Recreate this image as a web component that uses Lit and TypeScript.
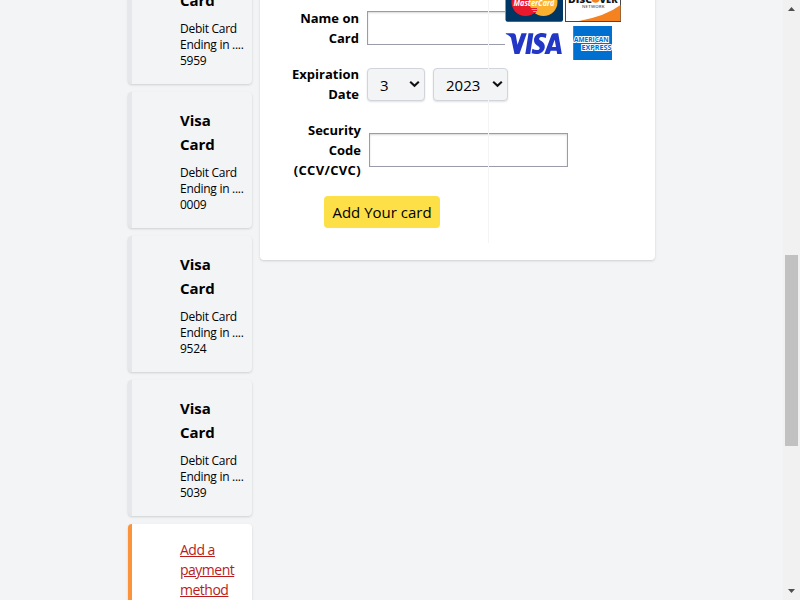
import { LitElement, html, css, svg } from "lit";
import { customElement, property } from "lit/decorators.js";

@customElement("payment-card")
class PaymentCard extends LitElement {
  @property() ending = "";
  @property({ type: Boolean }) add = false;

  static styles = css`
    :host { display: block; flex: none; }
    .card {
      box-sizing: border-box; width: 124px; height: 136px;
      padding: 16px 0 16px 48px; border-left: 4px solid #e5e7eb;
      border-radius: 4px; background: #f3f4f6; white-space: nowrap;
      box-shadow: 0 1px 3px rgba(0,0,0,.1), 0 1px 2px rgba(0,0,0,.06);
    }
    .card.add { background: #fff; border-left-color: #fb923c; }
    .title { font: 700 15px/24px "Open Sans", sans-serif; letter-spacing: -0.05px; }
    .detail { margin-top: 9px; font: 400 12px/16px "Open Sans", sans-serif; letter-spacing: -0.28px; }
    .link { font: 400 14px/20px "Open Sans", sans-serif; letter-spacing: -0.5px; color: #b91c1c; text-decoration: underline; }
  `;

  render() {
    return this.add
      ? html`<div class="card add"><div class="link">Add a<br>payment<br>method</div></div>`
      : html`<div class="card">
          <div class="title">Visa<br>Card</div>
          <div class="detail">Debit Card<br>Ending in ....<br>${this.ending}</div>
        </div>`;
  }
}

@customElement("card-logos")
class CardLogos extends LitElement {
  static styles = css`
    :host { display: block; }
    svg { display: block; }
    .brand { font-family: "Open Sans", sans-serif; }
  `;
  render() {
    return html`<svg width="117" height="64" viewBox="505 0 117 64">
      ${svg`
      <rect x="505" y="0" width="117" height="64" fill="#fff"/>
      <rect x="505.5" y="-16" width="57.5" height="37.7" rx="2" fill="#003663"/>
      <circle cx="525.5" cy="2" r="14" fill="#e8192c"/>
      <circle cx="543.5" cy="2" r="14" fill="#fbb12f"/>
      <path d="M531 8.5h6M532 10.5h5M533 12.5h3" stroke="#e8192c"/>
      <text class="brand" x="513.5" y="6.2" font-size="8" font-weight="700" font-style="italic" fill="#fff" textLength="41" lengthAdjust="spacingAndGlyphs">MasterCard</text>
      <rect x="565.5" y="-15" width="55" height="36.5" fill="#fff" stroke="#45474b"/>
      <path d="M579 21Q606 16 620.5 5V21Z" fill="#f58220"/>
      <text class="brand" x="568" y="2.7" font-size="9.5" font-weight="800" fill="#141414" textLength="24" lengthAdjust="spacingAndGlyphs">DISC</text>
      <circle cx="595.5" cy="-1.2" r="4" fill="#f58220"/>
      <text class="brand" x="599.5" y="2.7" font-size="9.5" font-weight="800" fill="#141414" textLength="18" lengthAdjust="spacingAndGlyphs">VER</text>
      <text class="brand" x="582" y="7.6" font-size="4.3" font-weight="600" fill="#555" textLength="22.5">NETWORK</text>
      <g fill="#2337c6">
        <path d="M505.8 33.2H513.2Q515.3 33.3 515.8 35.3L517.5 44.7 521.5 33.2H526.8L519.4 54H514.5L511 37.8Q509 35.2 505.8 34Z"/>
        <path d="M528.5 33.2H533.4L530.2 54H525.3Z"/>
        <path d="M546.6 33.7L545.8 38C542.5 36.4 539.2 36.7 539.1 38.7 539 40.8 545.3 41.4 544.8 47 544.3 53.3 537.5 55.4 531.6 53.3L532.4 48.8C535.5 50.6 539.5 50.5 539.7 48.2 539.9 45.7 533.8 45.4 534 39.7 534.3 33.8 540.5 31.5 546.6 33.7Z"/>
        <path fill-rule="evenodd" d="M553.8 33.2H558.2L561.8 54H557.2L556.6 50.8H550.7L549.4 54H544.3L551.5 35Q552.2 33.3 553.8 33.2ZM554.7 39.8L552 47H556Z"/>
      </g>
      <rect x="573.2" y="26" width="38.8" height="34" fill="#006fd0"/>
      <g class="brand" font-size="6.3" font-weight="700" fill="#006fd0" stroke="#fff" stroke-width="1.8" paint-order="stroke">
        <text x="574" y="42.4" textLength="34.5" lengthAdjust="spacingAndGlyphs">AMERICAN</text>
        <text x="581.5" y="49.5" textLength="30" lengthAdjust="spacingAndGlyphs">EXPRESS</text>
      </g>`}
    </svg>`;
  }
}

@customElement("app-root")
class AppRoot extends LitElement {
  static styles = css`
    :host { display: block; width: 800px; height: 600px; overflow: hidden; color: #000; }
    .page { display: flex; box-sizing: border-box; width: 800px; height: 600px; padding-left: 128px; background: #f3f4f6; overflow: hidden; align-items: flex-start; }
    .cards { display: flex; flex-direction: column; gap: 8px; width: 124px; margin: -52px 8px 0 0; height: 652px; }
    .panel {
      position: relative; box-sizing: border-box; width: 395px; height: 280px; margin-top: -20px;
      padding: 28px 0 0 29px; background: #fff; border-radius: 4px;
      box-shadow: 0 1px 3px rgba(0,0,0,.1), 0 1px 2px rgba(0,0,0,.06);
    }
    .row { display: flex; align-items: center; gap: 8px; margin-bottom: 16px; }
    .label { width: 70px; text-align: right; white-space: nowrap; font: 700 13px/20px "Open Sans", sans-serif; letter-spacing: 0; }
    .label.code { width: 72px; }
    .wide { letter-spacing: 0.35px; }
    .input { box-sizing: border-box; width: 199px; height: 34px; background: #fff; border: 1px solid #9b9ca9; box-shadow: inset 0 1px 2px rgba(0,0,0,.16); }
    .select {
      display: flex; align-items: center; justify-content: space-between; box-sizing: border-box;
      width: 58px; height: 33px; margin-top: 1px; padding: 1px 4px 0 12px; border: 1px solid #d1d5db; border-radius: 4px;
      background: #f3f4f6; box-shadow: 0 1px 2px rgba(0,0,0,.12);
      font: 400 15px/24px "Open Sans", sans-serif;
    }
    .select.year { width: 75px; }
    .select svg { margin-bottom: 3px; }
    .button { display: flex; align-items: center; justify-content: center; width: 116px; height: 32px; margin-left: 35px; border-radius: 4px; background: #fde047; font: 400 15px/24px "Open Sans", sans-serif; white-space: nowrap; }
    .divider { position: absolute; left: 228px; top: 0; width: 1px; height: 263px; background: #f3f4f6; }
    .logos { position: absolute; left: 245px; top: 20px; }
    .scroll { display: flex; flex-direction: column; align-items: center; justify-content: space-between; box-sizing: border-box; width: 17px; height: 600px; margin-left: auto; padding: 7px 2px 7px; background: #f1f1f1; }
    .thumb { width: 13px; height: 191px; margin: 244px 0 auto; background: #c1c1c1; }
    .scroll svg { display: block; flex: none; }
  `;

  chevron() {
    return html`<svg width="11" height="8" viewBox="0 0 11 8"><path d="M1.2 1.7L5.5 5.8 9.8 1.7" fill="none" stroke="#111" stroke-width="2.1"/></svg>`;
  }

  render() {
    return html`<div class="page">
      <div class="cards">
        ${["5959", "0009", "9524", "5039"].map((n) => html`<payment-card ending=${n}></payment-card>`)}
        <payment-card add></payment-card>
      </div>
      <div class="panel">
        <div class="row"><div class="label">Name on<br>Card</div><div class="input"></div></div>
        <div class="row">
          <div class="label">Expiration<br>Date</div>
          <div class="select"><span>3</span>${this.chevron()}</div>
          <div class="select year"><span>2023</span>${this.chevron()}</div>
        </div>
        <div class="row"><div class="label code">Security<br>Code<br><span class="wide">(CCV/CVC)</span></div><div class="input"></div></div>
        <div class="button">Add Your card</div>
        <div class="divider"></div>
        <div class="logos"><card-logos></card-logos></div>
      </div>
      <div class="scroll">
        <svg width="7" height="4" viewBox="0 0 7 4"><path d="M0 4L3.5 0 7 4Z" fill="#505050"/></svg>
        <div class="thumb"></div>
        <svg width="7" height="4" viewBox="0 0 7 4"><path d="M0 0L3.5 4 7 0Z" fill="#505050"/></svg>
      </div>
    </div>`;
  }
}
